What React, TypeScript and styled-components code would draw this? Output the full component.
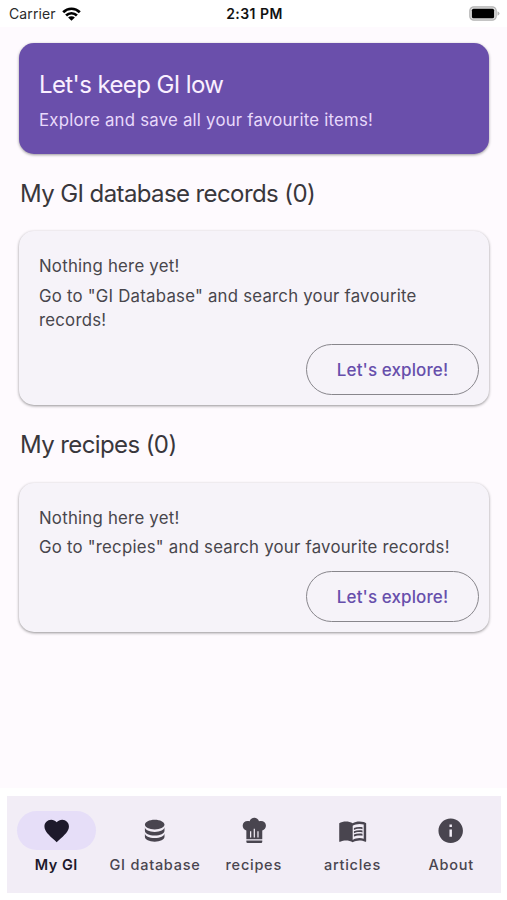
import React from "react";
import styled, { createGlobalStyle } from "styled-components";
import { MdFavorite, MdInfo, MdMenuBook } from "react-icons/md";

const GlobalStyle = createGlobalStyle`
  * { box-sizing: border-box; }
  body { margin: 0; background: #fff; font-family: Inter, "Liberation Sans", sans-serif; }
`;

const Screen = styled.div`
  width: 507px;
  height: 900px;
  display: flex;
  flex-direction: column;
  background: #fff;
  overflow: hidden;
`;

const StatusBar = styled.header`
  height: 27px;
  flex: none;
  display: grid;
  grid-template-columns: 1fr auto 1fr;
  align-items: center;
  padding: 0 7px 0 9px;
`;

const Carrier = styled.div`
  display: flex;
  align-items: center;
  gap: 6px;
  font-size: 14px;
  letter-spacing: 0.1px;
  color: #2b2b2b;
`;

const Clock = styled.div`
  font-size: 14px;
  font-weight: 600;
  letter-spacing: 0.45px;
  color: #111;
`;

const BatterySlot = styled.div`
  display: flex;
  justify-content: flex-end;
`;

const Content = styled.main`
  flex: none;
  height: 761px;
  padding: 16px 18px 0 19px;
  background: #fefafe;
`;

const Banner = styled.section`
  height: 111px;
  padding: 25px 20px 0;
  border-radius: 15px;
  background: #6a4fab;
  box-shadow: 0 1px 3px rgba(0, 0, 0, 0.4);
`;

const BannerTitle = styled.h1`
  margin: 0;
  font-size: 24px;
  line-height: 34px;
  font-weight: 400;
  letter-spacing: -0.6px;
  color: #faf0ff;
`;

const BannerText = styled.p`
  margin: 6px 0 0;
  font-size: 16.8px;
  line-height: 24px;
  letter-spacing: 0.22px;
  color: #e8d9fb;
`;

const SectionTitle = styled.h2`
  margin: 23px 0 20.3px 1px;
  font-size: 24px;
  line-height: 34px;
  font-weight: 400;
  letter-spacing: -0.6px;
  color: #39373c;
`;

const Card = styled.section<{ $height: number }>`
  display: flex;
  flex-direction: column;
  height: ${(p) => p.$height}px;
  padding: 23px 10px 10px 20px;
  border-radius: 15px;
  background: #f6f3f9;
  box-shadow: 0 1px 3px rgba(0, 0, 0, 0.42);
`;

const CardText = styled.p`
  margin: 0 0 5px;
  font-size: 16.8px;
  line-height: 24.5px;
  letter-spacing: 0.23px;
  color: #48464c;
`;

const ExploreButton = styled.button`
  width: 173px;
  height: 51px;
  flex: none;
  margin: auto 0 0 auto;
  padding: 0;
  border: 1px solid #88868c;
  border-radius: 26px;
  background: transparent;
  font-family: inherit;
  font-size: 17px;
  font-weight: 500;
  letter-spacing: 0.1px;
  color: #674fac;
`;

const NavBar = styled.nav`
  flex: none;
  height: 97px;
  margin: 8px 6.5px 0 7px;
  display: grid;
  grid-template-columns: repeat(5, 1fr);
  background: #f2edf6;
`;

const NavItem = styled.a<{ $active?: boolean }>`
  display: flex;
  flex-direction: column;
  align-items: center;
  padding-top: 15px;
  font-size: 14.5px;
  line-height: 20px;
  font-weight: ${(p) => (p.$active ? 600 : 500)};
  color: ${(p) => (p.$active ? "#1d192b" : "#49454f")};
  letter-spacing: ${(p) => (p.$active ? 0.5 : 0.75)}px;
  white-space: nowrap;
`;

const IconPill = styled.span<{ $active?: boolean }>`
  width: 79px;
  height: 39px;
  margin-bottom: 5px;
  display: flex;
  align-items: center;
  justify-content: center;
  border-radius: 20px;
  background: ${(p) => (p.$active ? "#e6def8" : "transparent")};
`;

const ICON = 29.4;

const DatabaseIcon = () => (
  <svg width={ICON} height={ICON} viewBox="0 0 24 24" fill="currentColor">
    <path d="M12,3C7.58,3 4,4.79 4,7C4,9.21 7.58,11 12,11C16.42,11 20,9.21 20,7C20,4.79 16.42,3 12,3M4,9V12C4,14.21 7.58,16 12,16C16.42,16 20,14.21 20,12V9C20,11.21 16.42,13 12,13C7.58,13 4,11.21 4,9M4,14V17C4,19.21 7.58,21 12,21C16.42,21 20,19.21 20,17V14C20,16.21 16.42,18 12,18C7.58,18 4,16.21 4,14Z" />
  </svg>
);

const ChefHatIcon = () => (
  <svg width={ICON} height={ICON} viewBox="0 0 24 24" fill="currentColor">
    <path d="M12.5,1.5C10.73,1.5 9.17,2.67 8.67,4.37C8.14,4.13 7.58,4 7,4A4,4 0 0,0 3,8C3,9.82 4.24,11.41 6,11.87V19H19V11.87C20.76,11.41 22,9.82 22,8A4,4 0 0,0 18,4C17.42,4 16.86,4.13 16.33,4.37C15.83,2.67 14.27,1.5 12.5,1.5M12,10.5H13V17.5H12V10.5M9,12.5H10V17.5H9V12.5M15,12.5H16V17.5H15V12.5M6,20V21A1,1 0 0,0 7,22H18A1,1 0 0,0 19,21V20H6Z" />
  </svg>
);

const WifiIcon = () => (
  <svg width="19" height="14" viewBox="0 0 19 14">
    <g fill="none" stroke="#000" strokeWidth="2.7">
      <path d="M1.2 5.2A11.7 11.7 0 0 1 17.8 5.2" />
      <path d="M4.1 8.5A7.6 7.6 0 0 1 14.9 8.5" />
    </g>
    <path d="M9.5 13.8L6.1 10.6A4.8 4.8 0 0 1 12.9 10.6Z" fill="#000" />
  </svg>
);

const BatteryIcon = () => (
  <svg width="31" height="15" viewBox="0 0 31 15">
    <rect x="0.8" y="0.8" width="26.4" height="13.4" rx="4" fill="#dcdcdc" stroke="#b4b4b4" strokeWidth="1.2" />
    <rect x="2.9" y="2.7" width="22.2" height="9.6" rx="1.6" fill="#000" />
    <path d="M28.5 5.2Q30.5 6 30.5 7.5T28.5 9.8Z" fill="#b4b4b4" />
  </svg>
);

const navItems = [
  { label: "My GI", icon: <MdFavorite size={ICON} />, active: true },
  { label: "GI database", icon: <DatabaseIcon /> },
  { label: "recipes", icon: <ChefHatIcon /> },
  { label: "articles", icon: <MdMenuBook size={ICON} /> },
  { label: "About", icon: <MdInfo size={ICON} /> },
];

export default function App() {
  return (
    <Screen>
      <GlobalStyle />
      <StatusBar>
        <Carrier>
          Carrier
          <WifiIcon />
        </Carrier>
        <Clock>2:31 PM</Clock>
        <BatterySlot>
          <BatteryIcon />
        </BatterySlot>
      </StatusBar>
      <Content>
        <Banner>
          <BannerTitle>Let's keep GI low</BannerTitle>
          <BannerText>Explore and save all your favourite items!</BannerText>
        </Banner>
        <SectionTitle>My GI database records (0)</SectionTitle>
        <Card $height={174}>
          <CardText>Nothing here yet!</CardText>
          <CardText>Go to "GI Database" and search your favourite records!</CardText>
          <ExploreButton>Let's explore!</ExploreButton>
        </Card>
        <SectionTitle>My recipes (0)</SectionTitle>
        <Card $height={149.8}>
          <CardText>Nothing here yet!</CardText>
          <CardText>Go to "recpies" and search your favourite records!</CardText>
          <ExploreButton>Let's explore!</ExploreButton>
        </Card>
      </Content>
      <NavBar>
        {navItems.map((item) => (
          <NavItem key={item.label} $active={item.active}>
            <IconPill $active={item.active}>{item.icon}</IconPill>
            <span>{item.label}</span>
          </NavItem>
        ))}
      </NavBar>
    </Screen>
  );
}
